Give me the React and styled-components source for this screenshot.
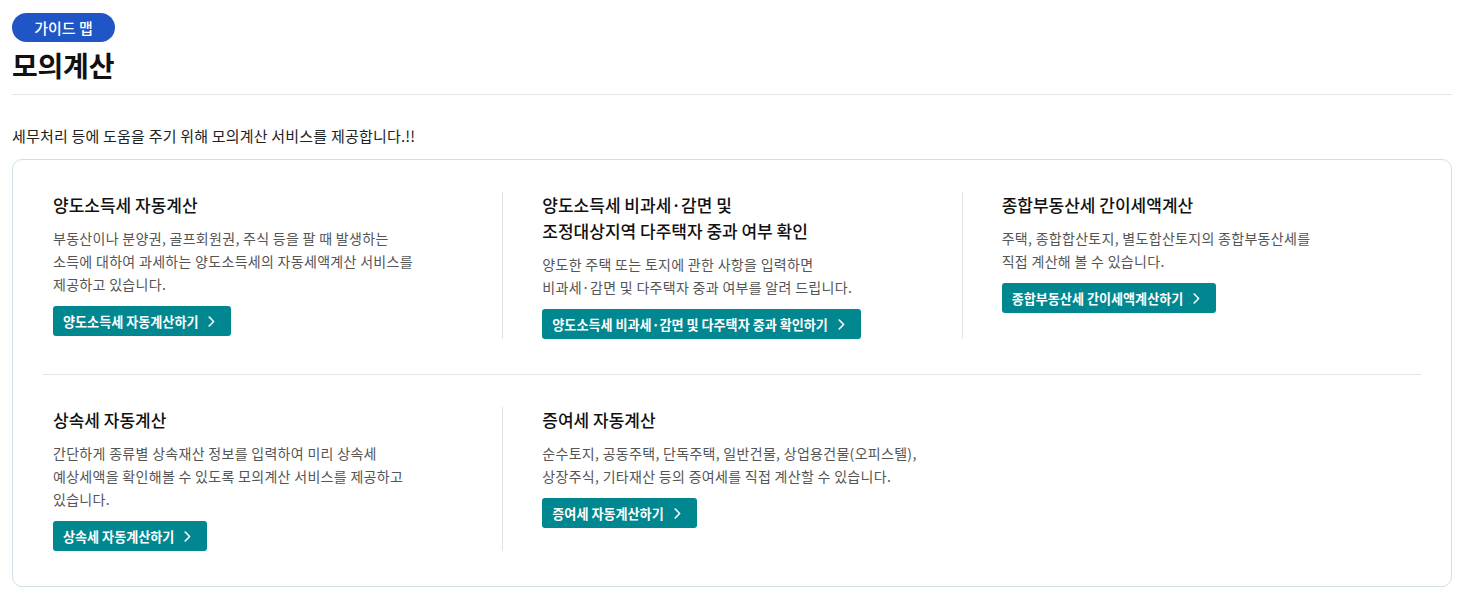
import React from 'react';
import styled, { createGlobalStyle } from 'styled-components';

const GlobalStyle = createGlobalStyle`
  body {
    margin: 0;
    background: #fff;
    font-family: "Noto Sans CJK KR", "Noto Sans", sans-serif;
    color: #222;
  }
`;

const calcs = [
  [
    {
      title: ['양도소득세 자동계산'],
      desc: [
        '부동산이나 분양권, 골프회원권, 주식 등을 팔 때 발생하는',
        '소득에 대하여 과세하는 양도소득세의 자동세액계산 서비스를',
        '제공하고 있습니다.',
      ],
      button: '양도소득세 자동계산하기',
    },
    {
      title: ['양도소득세 비과세·감면 및', '조정대상지역 다주택자 중과 여부 확인'],
      desc: ['양도한 주택 또는 토지에 관한 사항을 입력하면', '비과세·감면 및 다주택자 중과 여부를 알려 드립니다.'],
      button: '양도소득세 비과세·감면 및 다주택자 중과 확인하기',
    },
    {
      title: ['종합부동산세 간이세액계산'],
      desc: ['주택, 종합합산토지, 별도합산토지의 종합부동산세를', '직접 계산해 볼 수 있습니다.'],
      button: '종합부동산세 간이세액계산하기',
    },
  ],
  [
    {
      title: ['상속세 자동계산'],
      desc: [
        '간단하게 종류별 상속재산 정보를 입력하여 미리 상속세',
        '예상세액을 확인해볼 수 있도록 모의계산 서비스를 제공하고',
        '있습니다.',
      ],
      button: '상속세 자동계산하기',
    },
    {
      title: ['증여세 자동계산'],
      desc: ['순수토지, 공동주택, 단독주택, 일반건물, 상업용건물(오피스텔),', '상장주식, 기타재산 등의 증여세를 직접 계산할 수 있습니다.'],
      button: '증여세 자동계산하기',
    },
  ],
];

const withBreaks = (lines) =>
  lines.map((line, i) => (
    <React.Fragment key={i}>
      {i > 0 && <br />}
      {line}
    </React.Fragment>
  ));

const Chevron = () => (
  <svg width="7" height="11" viewBox="0 0 7 11" fill="none">
    <polyline points="1.2,1 5.6,5.5 1.2,10" stroke="#fff" strokeWidth="1.6" strokeLinecap="round" strokeLinejoin="round" />
  </svg>
);

const App = () => {
  return (
    <Page>
      <GlobalStyle />
      <Header>
        <GuideBadge>가이드 맵</GuideBadge>
        <PageTitle>모의계산</PageTitle>
      </Header>
      <Intro>세무처리 등에 도움을 주기 위해 모의계산 서비스를 제공합니다.!!</Intro>
      <Card>
        {calcs.map((row, r) => (
          <Row key={r}>
            {row.map((item) => (
              <Item key={item.button}>
                <ItemTitle>{withBreaks(item.title)}</ItemTitle>
                <ItemDesc>{withBreaks(item.desc)}</ItemDesc>
                <CalcButton type="button">
                  {item.button}
                  <Chevron />
                </CalcButton>
              </Item>
            ))}
          </Row>
        ))}
      </Card>
    </Page>
  );
};

export default App;

const Page = styled.div`
  padding: 13px 16px 0 12px;
`;

const Header = styled.header`
  padding-bottom: 11px;
  border-bottom: 1px solid #e4e6e8;
`;

const GuideBadge = styled.span`
  display: inline-flex;
  align-items: center;
  justify-content: center;
  height: 29px;
  width: 103px;
  border-radius: 15px;
  background: #2055c6;
  color: #fff;
  font-size: 15px;
  font-weight: 500;
`;

const PageTitle = styled.h1`
  margin: 5px 0 0;
  font-size: 28px;
  line-height: 36px;
  font-weight: 700;
  letter-spacing: -0.2px;
  color: #111;
`;

const Intro = styled.p`
  margin: 31px 0 13px;
  font-size: 15px;
  line-height: 20px;
  letter-spacing: 0.2px;
  color: #222;
`;

const Card = styled.section`
  border: 1px solid #cfe1e4;
  border-radius: 10px;
  padding: 0 30px;
`;

const Row = styled.div`
  display: grid;
  grid-template-columns: repeat(3, 1fr);
  padding: 32px 0 35px;

  & + & {
    border-top: 1px solid #e2e6e8;
  }
`;

const Item = styled.div`
  display: flex;
  flex-direction: column;
  align-items: flex-start;
  padding: 0 40px 0 39px;
  border-left: 1px solid #e3e3e3;

  &:first-child {
    padding-left: 10px;
    border-left: none;
  }
`;

const ItemTitle = styled.h3`
  margin: 0;
  font-size: 17px;
  line-height: 26px;
  font-weight: 500;
  color: #111;
`;

const ItemDesc = styled.p`
  margin: 9px 0 0;
  font-size: 14px;
  line-height: 23px;
  letter-spacing: 0.3px;
  color: #555;
  white-space: nowrap;
`;

const CalcButton = styled.button`
  display: inline-flex;
  align-items: center;
  gap: 10px;
  height: 30px;
  margin-top: 10px;
  padding: 0 16px 0 10px;
  border: none;
  border-radius: 3px;
  background: #008790;
  color: #fff;
  font-family: inherit;
  font-size: 13.1px;
  font-weight: 700;
  cursor: pointer;
  white-space: nowrap;
`;
